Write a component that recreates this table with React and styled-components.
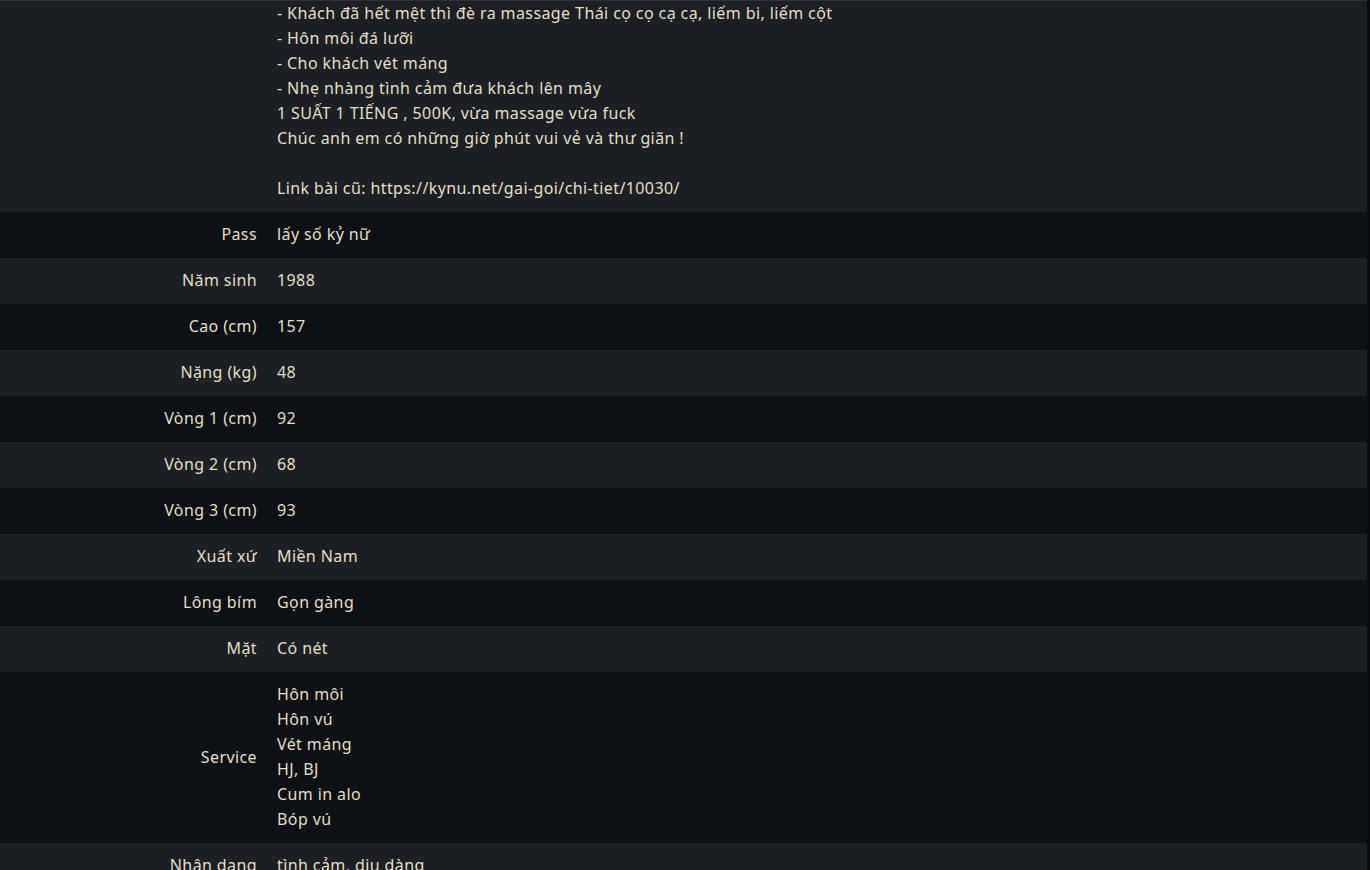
import styled, { createGlobalStyle } from "styled-components";

const GlobalStyle = createGlobalStyle`
  html, body {
    margin: 0;
    padding: 0;
    background: #0b0d10;
    overflow: hidden;
  }
`;

const Page = styled.div`
  width: 1367px;
  height: 870px;
  overflow: hidden;
  border-top: 1px solid #2e3136;
  font-family: "Noto Sans", "Open Sans", sans-serif;
  font-size: 16px;
  line-height: 25px;
  letter-spacing: 0.4px;
  color: #e4dfc6;
`;

const Table = styled.div`
  display: grid;
  grid-template-columns: 267px 1fr;
`;

const Row = styled.div`
  display: contents;
`;

const Label = styled.div`
  background: ${(p) => (p.$alt ? "#1c1f24" : "#0d1014")};
  padding: ${(p) => (p.$top ? "0" : "10.5px")} 10px 10.5px 10px;
  display: flex;
  align-items: center;
  justify-content: flex-end;
  text-align: right;
  white-space: nowrap;
`;

const Value = styled.div`
  background: ${(p) => (p.$alt ? "#1c1f24" : "#0d1014")};
  padding: ${(p) => (p.$top ? "0" : "10.5px")} 10px 10.5px 10px;
  white-space: pre-line;
`;

const intro = `- Khách đã hết mệt thì đè ra massage Thái cọ cọ cạ cạ, liếm bi, liếm cột
- Hôn môi đá lưỡi
- Cho khách vét máng
- Nhẹ nhàng tình cảm đưa khách lên mây
1 SUẤT 1 TIẾNG , 500K, vừa massage vừa fuck
Chúc anh em có những giờ phút vui vẻ và thư giãn !

Link bài cũ: https://kynu.net/gai-goi/chi-tiet/10030/`;

const rows = [
  ["Pass", "lấy số kỷ nữ"],
  ["Năm sinh", "1988"],
  ["Cao (cm)", "157"],
  ["Nặng (kg)", "48"],
  ["Vòng 1 (cm)", "92"],
  ["Vòng 2 (cm)", "68"],
  ["Vòng 3 (cm)", "93"],
  ["Xuất xứ", "Miền Nam"],
  ["Lông bím", "Gọn gàng"],
  ["Mặt", "Có nét"],
  ["Service", "Hôn môi\nHôn vú\nVét máng\nHJ, BJ\nCum in alo\nBóp vú"],
  ["Nhận dạng", "tình cảm, dịu dàng"],
];

export default function App() {
  return (
    <>
      <GlobalStyle />
      <Page>
        <Table>
          <Row>
            <Label $alt $top />
            <Value $alt $top>{intro}</Value>
          </Row>
          {rows.map(([label, value], i) => (
            <Row key={label}>
              <Label $alt={i % 2 === 1}>{label}</Label>
              <Value $alt={i % 2 === 1}>{value}</Value>
            </Row>
          ))}
        </Table>
      </Page>
    </>
  );
}
